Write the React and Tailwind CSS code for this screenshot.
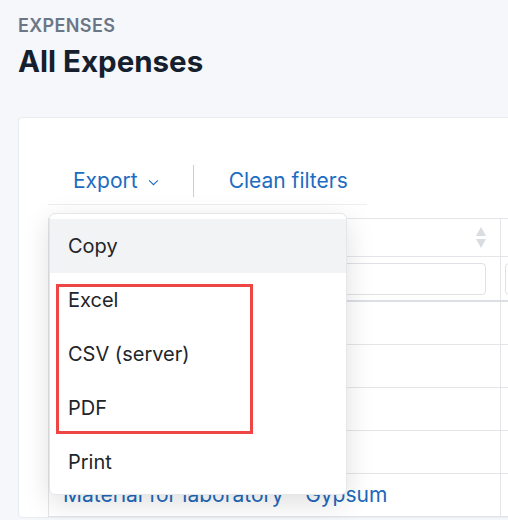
const rows = [1, 2, 3, 4];

function SortArrows() {
  return (
    <svg width="12" height="22" viewBox="0 0 12 22" className="text-[#d9dce1]">
      <path d="M6 0 L11 9 L1 9 Z" fill="currentColor" />
      <path d="M1 12 L11 12 L6 21 Z" fill="currentColor" />
    </svg>
  );
}

function ExportMenu() {
  const items = ["Copy", "Excel", "CSV (server)", "PDF", "Print"];
  return (
    <div className="absolute left-[1px] top-[56px] z-10 w-[298px] rounded-md border border-[#e4e6ea] bg-white pt-[5px] pb-[5px] shadow-[0_8px_28px_rgba(0,0,0,0.13)]">
      {items.map((item, i) => (
        <div
          key={item}
          className={`flex h-[54px] items-center px-[18px] text-[20px] text-[#222529] ${
            i === 0 ? "bg-[#f2f3f5]" : ""
          }`}
        >
          {item}
        </div>
      ))}
    </div>
  );
}

export default function App() {
  return (
    <div className="h-[520px] w-full overflow-hidden bg-[#f5f7fa] font-['Inter',sans-serif]">
      <div className="pl-[18px] pt-[16px]">
        <div className="text-[18px] font-semibold uppercase leading-[20px] tracking-[0.02em] text-[#6b7787]">
          Expenses
        </div>
        <h1 className="mt-[7px] text-[29.5px] font-bold leading-[36px] text-[#161f2e]">
          All Expenses
        </h1>

        <div className="mt-[38px] w-[720px] rounded border border-[#e8ebef] bg-white pl-[29px] pt-[39px]">
          <div className="relative">
            {/* toolbar */}
            <div className="flex h-[48px] w-fit items-center border-b border-[#eceef1]">
              <button className="flex shrink-0 items-center gap-[10px] whitespace-nowrap pl-[25px] pr-[22px] text-[21px] text-[#1d6cc2]">
                Export
                <svg width="11" height="7" viewBox="0 0 12 8" className="mt-[4px]">
                  <path d="M1 1.5 L6 6.5 L11 1.5" fill="none" stroke="currentColor" strokeWidth="1.2" />
                </svg>
              </button>
              <div className="mx-[12px] h-[32px] w-px shrink-0 bg-[#c9ccd1]" />
              <button className="shrink-0 whitespace-nowrap pl-[23px] pr-[19px] text-[21px] text-[#1d6cc2]">
                Clean filters
              </button>
            </div>

            {/* table */}
            <div className="mt-[13px] border-l border-t border-[#e3e5e8]">
              <div className="flex h-[38px] border-b border-[#e3e5e8]">
                <div className="flex w-[452px] items-center justify-end border-r border-[#e3e5e8] pr-[13px]">
                  <SortArrows />
                </div>
                <div className="flex-1" />
              </div>
              <div className="flex h-[45px] border-b-2 border-[#dcdfe3]">
                <div className="flex w-[452px] items-center border-r border-[#e3e5e8] pl-[14px] pr-[14px]">
                  <div className="h-[32px] w-full rounded-sm border border-[#dfe1e5]" />
                </div>
                <div className="flex flex-1 items-center pl-[4px]">
                  <div className="h-[32px] w-full rounded-sm border border-[#dfe1e5]" />
                </div>
              </div>
              {rows.map((r) => (
                <div key={r} className="flex h-[43px] border-b border-[#e3e5e8]">
                  <div className="w-[452px] border-r border-[#e3e5e8]" />
                  <div className="flex-1" />
                </div>
              ))}
              <div className="flex h-[43px] border-b border-[#e3e5e8]">
                <div className="flex w-[452px] items-center border-r border-[#e3e5e8] pl-[14px]">
                  <a className="text-[21px] text-[#2068bb]">Material for laboratory - Gypsum</a>
                </div>
                <div className="flex-1" />
              </div>
            </div>

            <ExportMenu />

            {/* highlight annotation */}
            <div className="pointer-events-none absolute left-[8px] top-[127px] z-20 h-[150px] w-[197px] border-[3px] border-[#ee4545]" />
          </div>
        </div>
      </div>
    </div>
  );
}
